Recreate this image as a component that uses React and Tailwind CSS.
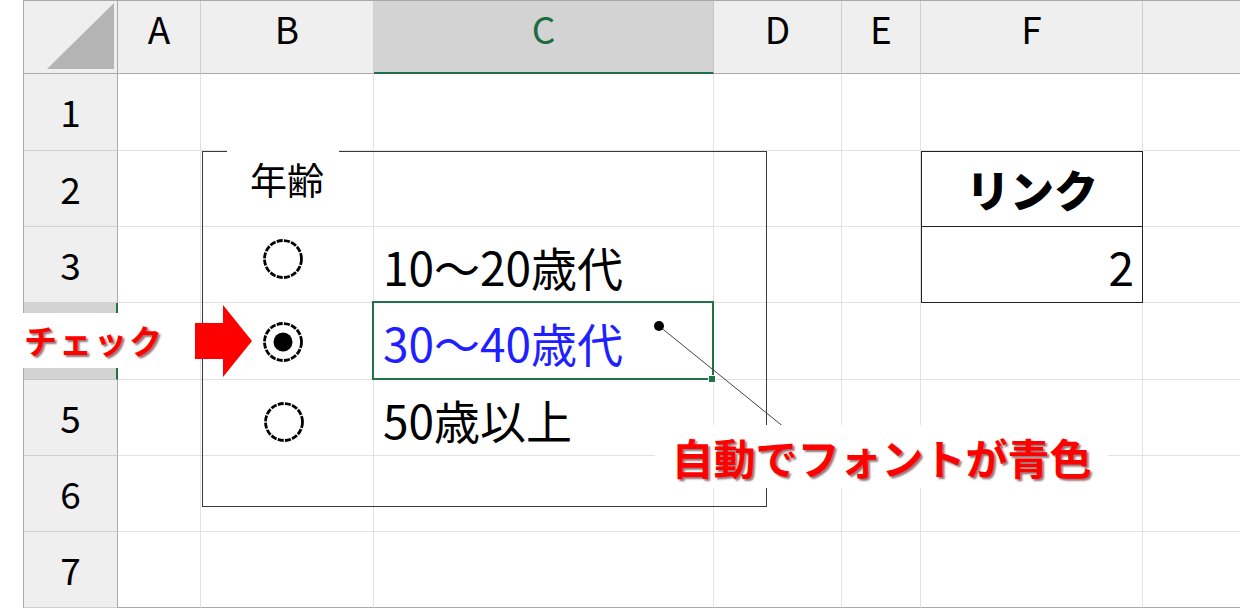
import React from "react";

const COLS = ["A", "B", "C", "D", "E", "F", ""];
const ROWS = [1, 2, 3, 4, 5, 6, 7];

function Radio({ checked }) {
  return (
    <svg width="42" height="42" viewBox="0 0 42 42">
      <circle cx="21" cy="21" r="18.5" fill="white" stroke="black" strokeWidth="2.8" strokeDasharray="6 1.3" />
      {checked && <circle cx="21" cy="21" r="9.5" fill="black" />}
    </svg>
  );
}

const jp = "font-['Noto_Sans_CJK_JP','Noto_Sans',sans-serif]";

function cellContent(col, row) {
  if (col === "C" && row === 3)
    return <span className={`${jp} text-[46px] leading-none text-black pl-[9px] pt-[2px]`}>10～20歳代</span>;
  if (col === "C" && row === 4)
    return <span className={`${jp} text-[46px] leading-none text-[#1f1fff] pl-[9px] pt-[2px]`}>30～40歳代</span>;
  if (col === "C" && row === 5)
    return <span className={`${jp} text-[46px] leading-none text-black pl-[9px] pt-[2px]`}>50歳以上</span>;
  if (col === "F" && row === 2)
    return <span className={`${jp} text-[44px] leading-none font-black text-black w-full text-center`}>リンク</span>;
  if (col === "F" && row === 3)
    return <span className={`${jp} text-[46px] leading-none text-black w-full text-right pr-[8px] pt-[2px]`}>2</span>;
  return null;
}

export default function App() {
  return (
    <div className="relative w-[1240px] h-[609px] bg-white overflow-hidden">
      <div className="pl-[23px]">
        <div className="grid grid-cols-[94px_83px_173px_340px_128px_79px_222px_98px] grid-rows-[73px_77px_76px_76px_77px_76px_76px_76px] border-l border-t border-[#a8a8a8]">
          {/* corner */}
          <div className="bg-[#efefef] border-r border-b border-[#ababab] relative">
            <svg className="absolute left-0 top-0" width="94" height="73" viewBox="0 0 94 73">
              <polygon points="23,68 90,68 90,2" fill="#b4b4b4" />
            </svg>
          </div>
          {COLS.map((c, i) => (
            <div
              key={i}
              className={
                c === "C"
                  ? `bg-[#d3d3d3] border-r border-[#c6c6c6] border-b-2 border-b-[#217346] flex justify-center pt-[3px] ${jp} text-[37px] leading-[48px] text-[#1d6b3f]`
                  : `bg-[#efefef] border-r border-b border-r-[#cfcfcf] border-b-[#ababab] flex justify-center pt-[3px] ${jp} text-[37px] leading-[48px] text-black`
              }
            >
              {c}
            </div>
          ))}
          {ROWS.map((r) => (
            <React.Fragment key={r}>
              <div
                className={
                  r === 4
                    ? `bg-[#d3d3d3] border-r-2 border-r-[#217346] border-b border-b-[#c6c6c6]`
                    : `bg-[#efefef] border-r border-b border-r-[#ababab] border-b-[#cfcfcf] flex items-center justify-center ${jp} text-[37px] text-black`
                }
              >
                {r === 4 ? null : r}
              </div>
              {COLS.map((c, i) => {
                let cls = "border-r border-b border-[#e1e1e1] flex items-center";
                if (c === "F" && r === 2) cls = "border border-[#222] flex items-center";
                if (c === "F" && r === 3) cls = "border-l border-r border-b border-[#222] flex items-center";
                if (r === 7) cls += " border-b-[#a8a8a8]";
                return (
                  <div key={i} className={cls}>
                    {cellContent(c, r)}
                  </div>
                );
              })}
            </React.Fragment>
          ))}
        </div>
      </div>

      {/* selected cell */}
      <div className="absolute left-[372px] top-[301px] w-[342px] h-[79px] border-2 border-[#217346]" />
      <div className="absolute left-[708px] top-[375px] w-[8px] h-[8px] bg-[#217346] border border-white" />

      {/* group box */}
      <div className="absolute left-[202px] top-[151px] w-[565px] h-[356px] border border-[#3a3a3a]">
        <div className="absolute left-[24px] top-[-3px] w-[112px] h-[6px] bg-white" />
      </div>
      <div className={`absolute left-[250px] top-[156px] ${jp} text-[37px] leading-[46px] text-black`}>年齢</div>

      {/* radio buttons */}
      <div className="absolute left-[262px] top-[238px]"><Radio /></div>
      <div className="absolute left-[262px] top-[321px]"><Radio checked /></div>
      <div className="absolute left-[263px] top-[401px]"><Radio /></div>

      {/* check label and arrow */}
      <div className="absolute left-0 top-[313px] w-[186px] h-[55px] bg-white flex items-center pl-[24px]">
        <span className={`${jp} text-[33px] leading-none font-bold text-[#ff0000] tracking-[2px] [text-shadow:2px_2px_2px_rgba(60,0,0,0.55)]`}>チェック</span>
      </div>
      <svg className="absolute left-[195px] top-[305px]" width="58" height="73" viewBox="0 0 58 73">
        <polygon points="0,18 28,18 28,0 57,36 28,72 28,54 0,54" fill="#ff0000" />
      </svg>

      {/* leader line */}
      <svg className="absolute left-0 top-0" width="1240" height="609" viewBox="0 0 1240 609">
        <line x1="659" y1="326" x2="790" y2="432" stroke="#444" strokeWidth="1" />
        <circle cx="659" cy="326" r="5" fill="black" />
      </svg>

      {/* callout */}
      <div className="absolute left-[655px] top-[425px] w-[453px] h-[63px] bg-white flex items-center justify-center">
        <span className={`${jp} text-[42px] leading-none font-bold text-[#ff0000] [text-shadow:2px_2px_2px_rgba(60,0,0,0.55)]`}>自動でフォントが青色</span>
      </div>
    </div>
  );
}
